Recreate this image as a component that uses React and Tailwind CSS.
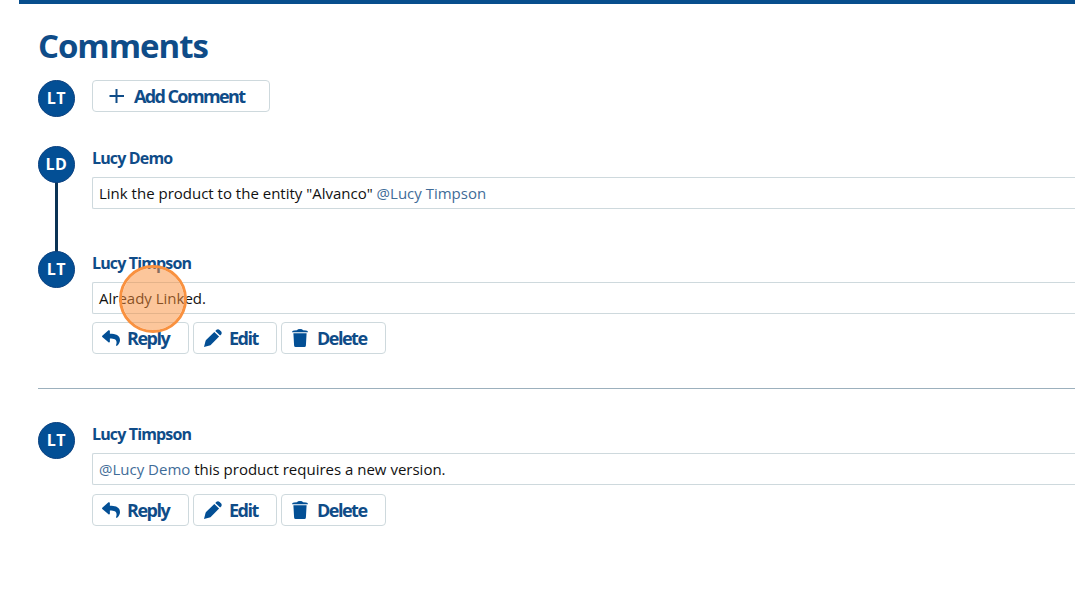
import { FaReply } from 'react-icons/fa';

const PlusIcon = () => (
    <svg width="16" height="16" viewBox="0 0 16 16" stroke="currentColor" strokeWidth="2" className="shrink-0">
        <path d="M7.500 1v14M.5 8h14.5" />
    </svg>
);

const PencilIcon = () => (
    <svg width="18" height="18" viewBox="0 0 18 18" fill="currentColor" className="shrink-0 text-[#034f95]">
        <path d="M0 18l1.4-5.6Q1.6 11.500 2.300 10.800L10.300 2.900 15.100 7.600 7.200 15.500Q6.500 16.300 5.600 16.500z" />
        <path d="M11.300 1.900L12.500.8Q14 -.4 15.600.9L17 2.300Q18.300 3.900 17.200 5.400L16.100 6.600z" />
    </svg>
);

const TrashIcon = () => (
    <svg width="16" height="18" viewBox="0 0 16 18" fill="currentColor" className="shrink-0 text-[#034f95]">
        <path d="M0 3.300q0-1.500 2-1.700l3-.3Q5.500 0 8 0t3 1.300l3 .3q2 .2 2 1.700zM1.400 4.200h13.200l-.7 12.300q-.1 1.500-1.500 1.500H3.600q-1.400 0-1.500-1.500z" />
    </svg>
);

const Avatar = ({ initials }) => (
    <div className="relative z-10 flex h-[37px] w-[37px] shrink-0 items-center justify-center rounded-full border border-[#0b4180] bg-[#034f95] pb-px text-[16px] font-bold tracking-[0.6px] text-white">
        {initials}
    </div>
);

const ActionButton = ({ icon, label, className }) => (
    <button className={`flex h-8 items-center rounded-[4px] border border-[#ced9dd] bg-white text-[18px] font-bold text-[#0f4c88] ${className}`}>
        {icon}
        {label}
    </button>
);

const Actions = () => (
    <div className="flex gap-1">
        <ActionButton className="w-[97px] gap-[7px] pl-[9px] tracking-[-1.5px]" icon={<FaReply size={18} color="#034f95" />} label="Reply" />
        <ActionButton className="w-[84px] gap-[7px] pl-[10px] tracking-[-1.5px]" icon={<PencilIcon />} label="Edit" />
        <ActionButton className="w-[105px] gap-[9px] pl-[10px] tracking-[-1.5px]" icon={<TrashIcon />} label="Delete" />
    </div>
);

const Comment = ({ initials, author, children, actions, threaded, highlighted }) => (
    <div className="relative flex gap-[17px]">
        {threaded && <div className="absolute top-[30px] left-[17px] h-20 w-[3px] bg-[#0a3355]" />}
        <Avatar initials={initials} />
        <div className="min-w-0 flex-1">
            <div className="h-[31px] text-[16px] leading-6 font-bold tracking-[-0.85px] text-[#0f4c88]">{author}</div>
            <div className="h-8 rounded-l-[2px] border border-r-0 border-[#ced9dd] pl-1.5 text-[15px] leading-[31px] text-[#111]">
                {children}
            </div>
            {actions && <div className={highlighted ? 'mt-2' : 'mt-[9px]'}><Actions /></div>}
        </div>
        {highlighted && (
            <div className="absolute top-[14px] left-[81px] z-20 h-[68px] w-[68px] rounded-full border-3 border-[#f9913f] bg-[#fa8e37]/50 bg-clip-padding" />
        )}
    </div>
);

export default function App() {
    return (
        <div className="h-[601px] overflow-hidden bg-white font-['Open_Sans',sans-serif]">
            <div className="ml-[19px] h-1 bg-[#074e8d]" />
            <main className="pt-5 pl-[38px]">
                <h1 className="h-14 text-[33px] leading-[44px] font-bold tracking-[-1.05px] text-[#0f4c88]">Comments</h1>
                <div className="flex h-[66px] gap-[17px]">
                    <Avatar initials="LT" />
                    <ActionButton className="w-[178px] gap-[9px] pl-4 tracking-[-1.6px]" icon={<PlusIcon />} label="Add Comment" />
                </div>
                <div className="h-[105px]">
                    <Comment initials="LD" author="Lucy Demo" threaded>
                        Link the product to the entity "Alvanco" <span className="text-[#3f6c98]">@Lucy Timpson</span>
                    </Comment>
                </div>
                <div className="h-[137px]">
                    <Comment initials="LT" author="Lucy Timpson" actions highlighted>Already Linked.</Comment>
                </div>
                <hr className="mb-[33px] border-[#9cb0bd]" />
                <Comment initials="LT" author="Lucy Timpson" actions>
                    <span className="text-[#3f6c98]">@Lucy Demo</span> this product requires a new version.
                </Comment>
            </main>
        </div>
    );
}
